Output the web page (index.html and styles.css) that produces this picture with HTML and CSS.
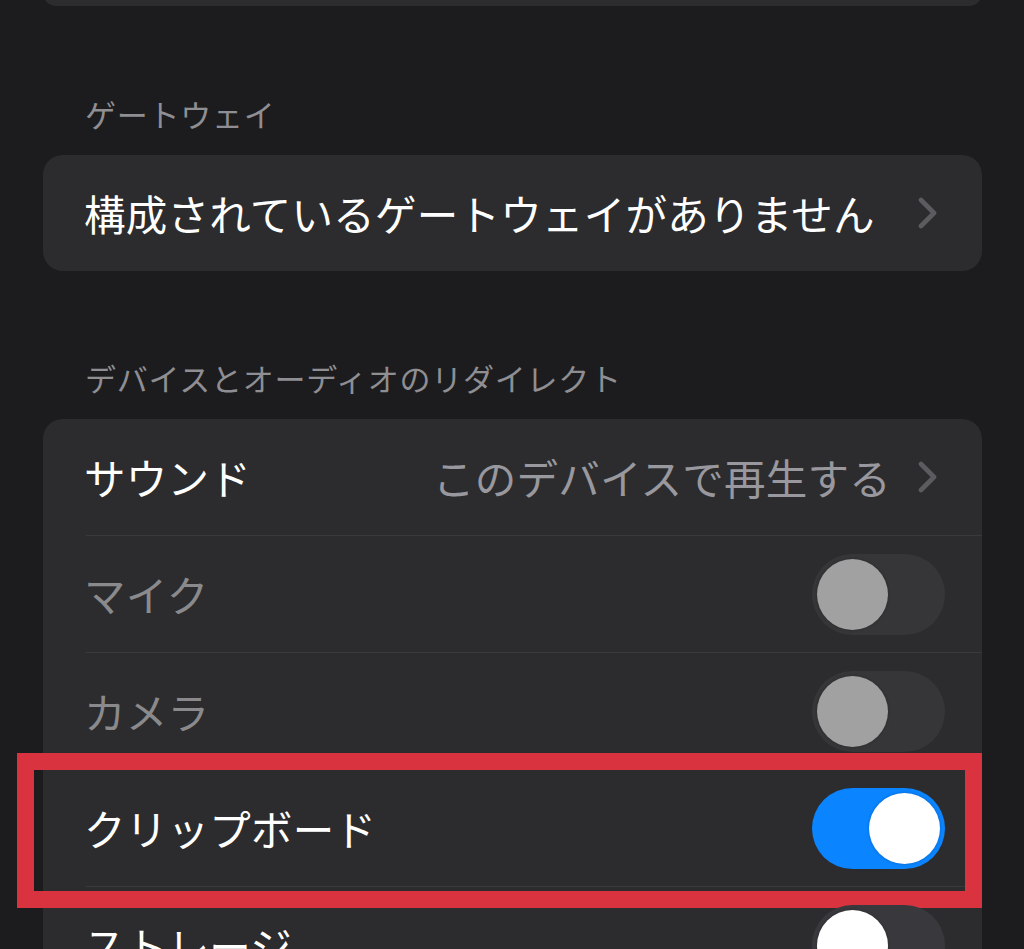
FILE: index.html
```html
<!DOCTYPE html>
<html lang="ja">
<head>
<meta charset="utf-8">
<title>設定</title>
<link rel="stylesheet" href="styles.css">
</head>
<body>
<div class="screen">
  <div class="card top-card"></div>

  <section class="section">
    <h2 class="section-header">ゲートウェイ</h2>
    <div class="card">
      <div class="row">
        <div class="row-inner nav">
          <span class="label">構成されているゲートウェイがありません</span>
          <svg class="chevron" viewBox="0 0 20 32" aria-hidden="true"><polyline points="3,3 16,16 3,29"/></svg>
        </div>
      </div>
    </div>
  </section>

  <section class="section">
    <h2 class="section-header">デバイスとオーディオのリダイレクト</h2>
    <div class="card">
      <div class="row">
        <div class="row-inner nav">
          <span class="label">サウンド</span>
          <span class="value">このデバイスで再生する</span>
          <svg class="chevron" viewBox="0 0 20 32" aria-hidden="true"><polyline points="3,3 16,16 3,29"/></svg>
        </div>
      </div>
      <div class="row">
        <div class="row-inner switch-row">
          <span class="label disabled">マイク</span>
          <span class="toggle off disabled"><span class="knob"></span></span>
        </div>
      </div>
      <div class="row">
        <div class="row-inner switch-row">
          <span class="label disabled">カメラ</span>
          <span class="toggle off disabled"><span class="knob"></span></span>
        </div>
      </div>
      <div class="row highlighted">
        <div class="row-inner switch-row">
          <span class="label">クリップボード</span>
          <span class="toggle on"><span class="knob"></span></span>
        </div>
        <div class="highlight-frame"></div>
      </div>
      <div class="row">
        <div class="row-inner switch-row last">
          <span class="label">ストレージ</span>
          <span class="toggle off"><span class="knob"></span></span>
        </div>
      </div>
    </div>
  </section>
</div>
</body>
</html>
```

FILE: styles.css
```css
html, body {
  margin: 0;
  padding: 0;
  background: #1c1c1e;
}

body {
  width: 1024px;
  height: 949px;
  overflow: hidden;
  font-family: "Noto Sans CJK JP", "Noto Sans", sans-serif;
  color: #ffffff;
}

.screen {
  padding: 0 42px 0 43px;
  display: flex;
  flex-direction: column;
}

.card {
  background: #2c2c2e;
  border-radius: 20px;
}

.top-card {
  height: 26px;
  margin-top: -20px;
}

.section {
  margin-top: 88px;
  display: flex;
  flex-direction: column;
}

.section + .section {
  margin-top: 87px;
}

.section-header {
  margin: 0 0 21px 42px;
  font-size: 31px;
  line-height: 40px;
  font-weight: 400;
  color: #8e8e93;
  letter-spacing: 0.75px;
}

.row {
  position: relative;
  padding-left: 43px;
}

.row-inner {
  display: flex;
  align-items: center;
  height: 116px;
  border-bottom: 1px solid #3a3a3d;
}

.row:last-child .row-inner {
  border-bottom: none;
}

.row-inner.nav {
  padding-right: 44px;
}

.row-inner.switch-row {
  padding-right: 37px;
}

.label {
  flex: 1;
  font-size: 41.5px;
  line-height: 50px;
  white-space: nowrap;
  color: #ffffff;
  letter-spacing: 0.25px;
  margin-left: -2px;
}

.label.disabled {
  color: #8a8a8d;
}

.value {
  font-size: 41.5px;
  line-height: 50px;
  color: #98989e;
  margin-right: 27px;
  white-space: nowrap;
  letter-spacing: 0.25px;
}

.chevron {
  width: 20px;
  height: 32px;
  flex: none;
  fill: none;
  stroke: #5b5b60;
  stroke-width: 4.6;
  stroke-linecap: round;
  stroke-linejoin: round;
}

.toggle {
  flex: none;
  width: 133px;
  height: 81px;
  border-radius: 41px;
  background: #39393d;
  display: flex;
  align-items: center;
  padding: 0 5px;
  box-sizing: border-box;
}

.toggle.on {
  background: #0a84ff;
  justify-content: flex-end;
}

.toggle.disabled {
  background: #363639;
}

.knob {
  width: 71px;
  height: 71px;
  border-radius: 50%;
  background: #ffffff;
  box-shadow: 0 0 3px rgba(0, 0, 0, 0.25);
}

.toggle.disabled .knob {
  background: #a1a1a1;
}

.highlight-frame {
  position: absolute;
  left: -26px;
  top: -17px;
  width: 965px;
  height: 155px;
  border: 17px solid #da3340;
  box-sizing: border-box;
  pointer-events: none;
}
```
